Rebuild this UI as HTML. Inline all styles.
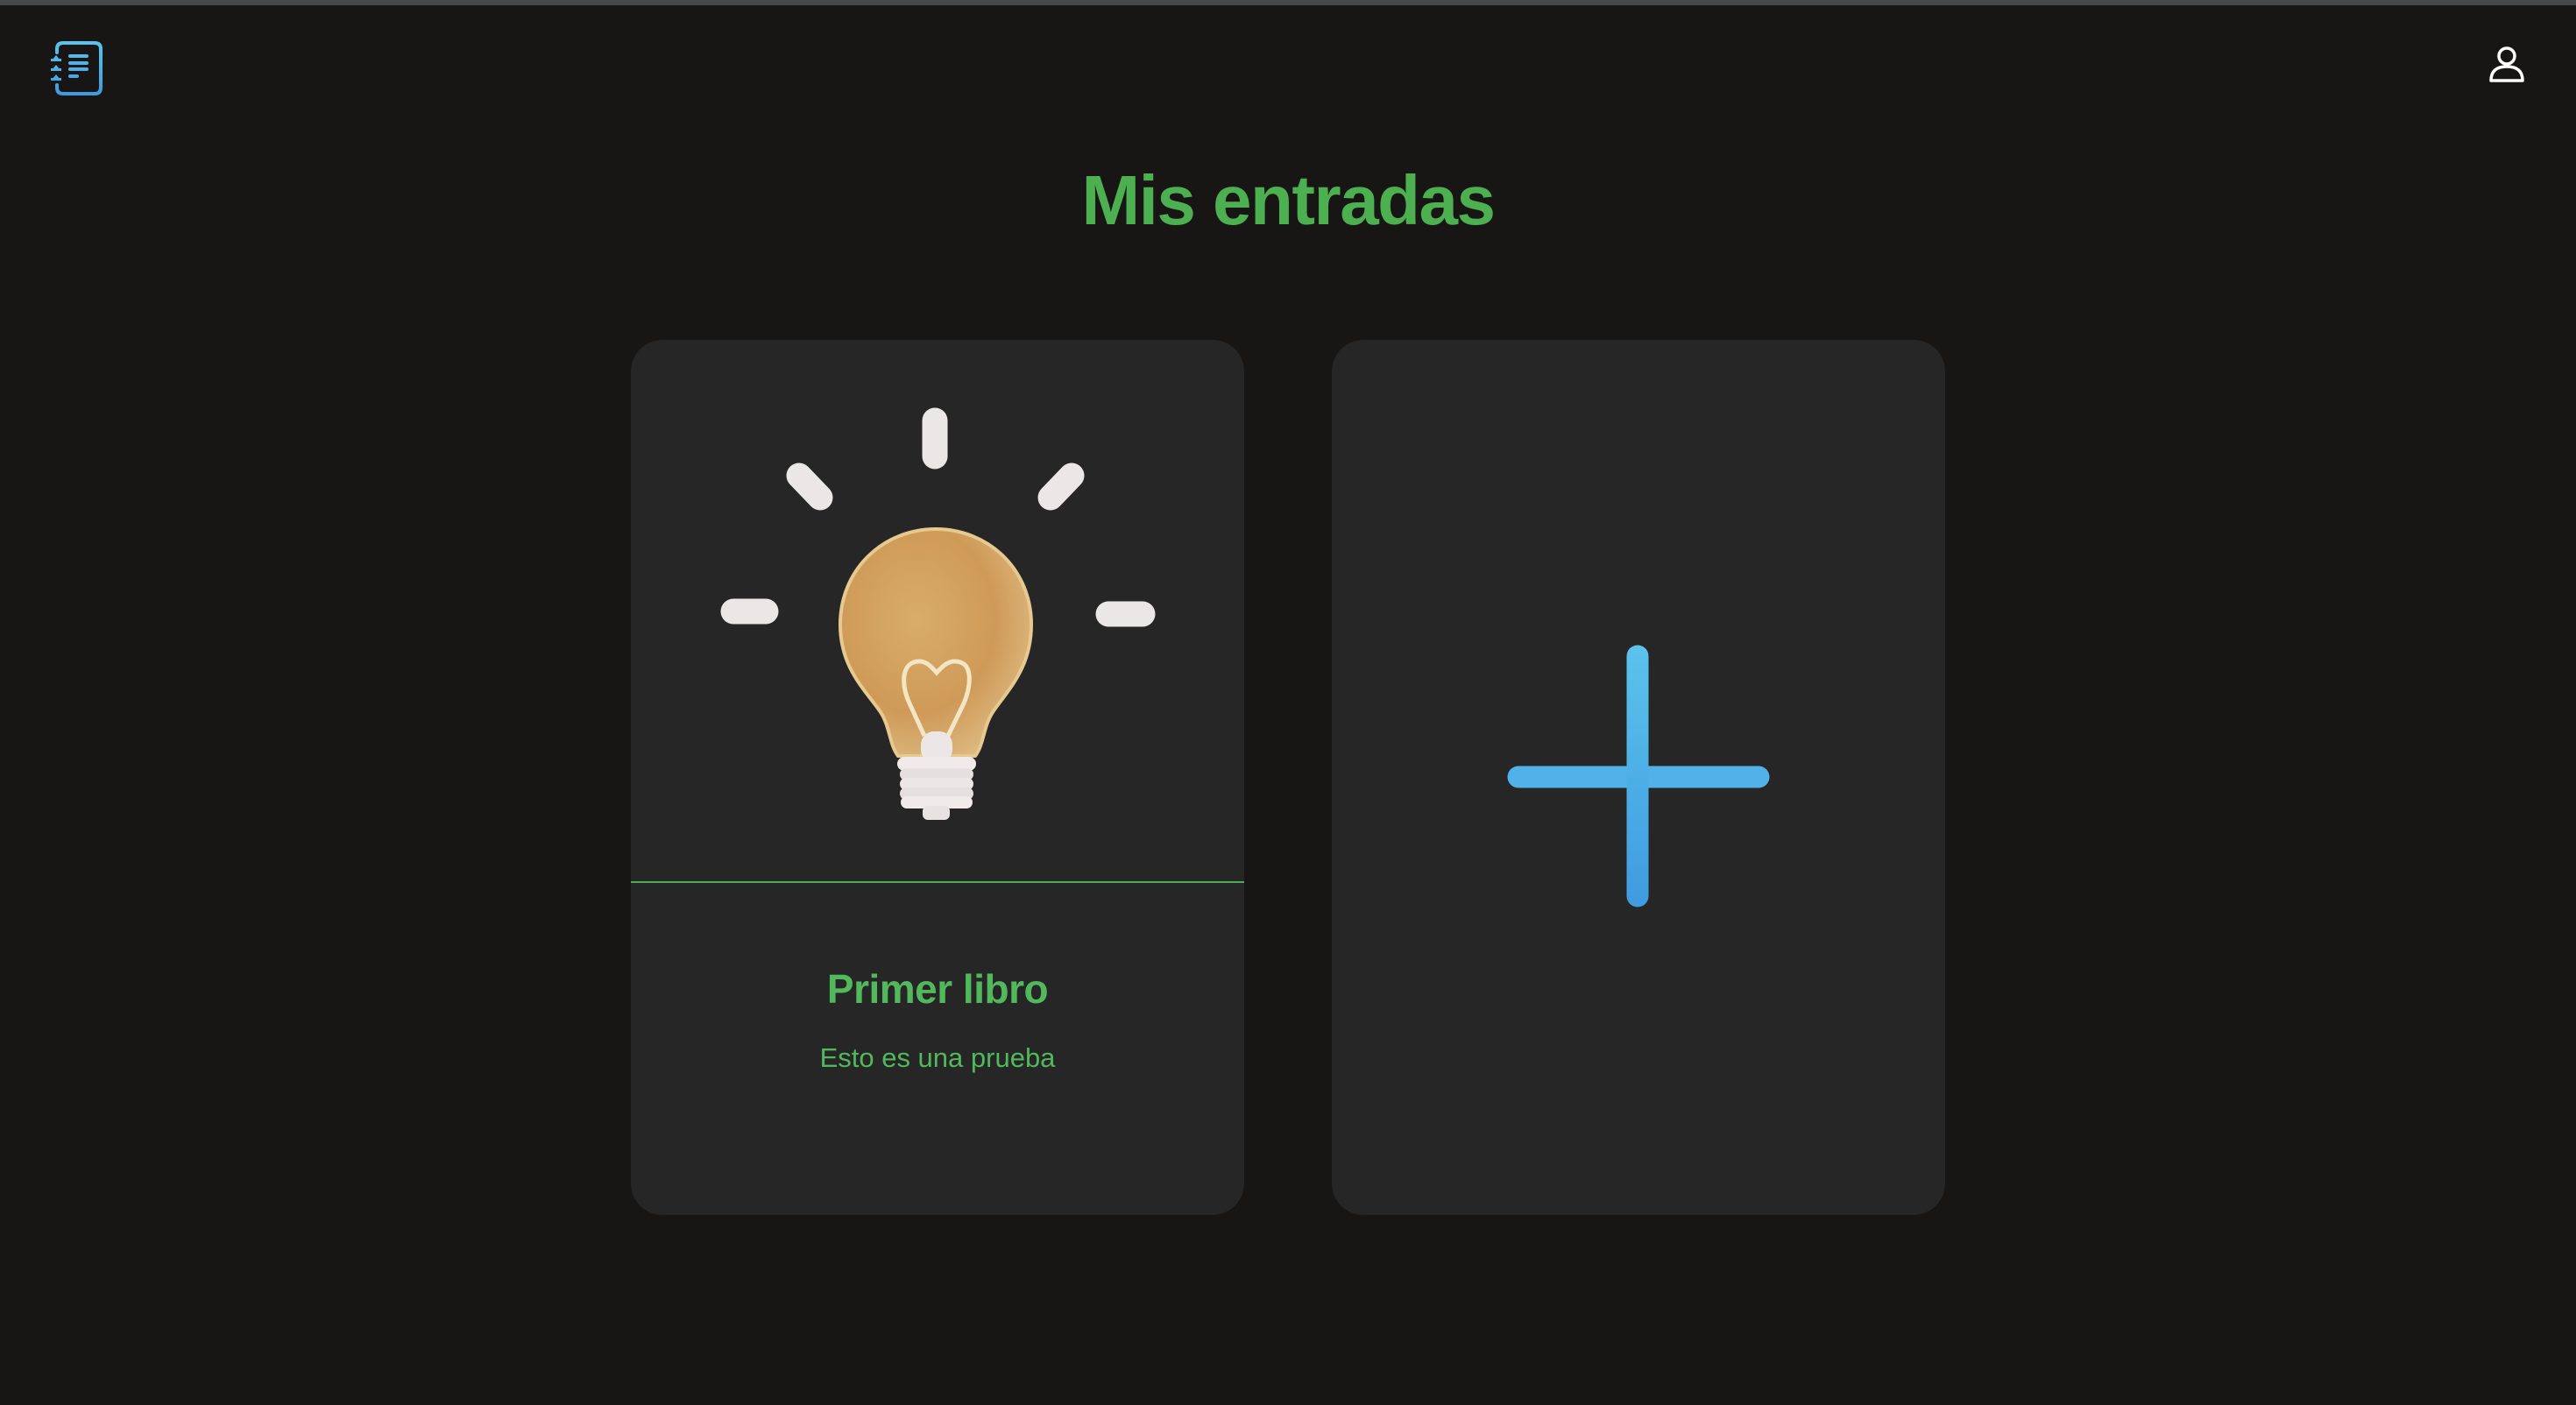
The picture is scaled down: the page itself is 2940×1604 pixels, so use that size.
<!DOCTYPE html>
<html><head><meta charset="utf-8"><style>
html,body{margin:0;padding:0;}
body{width:2940px;height:1604px;background:#181615;position:relative;overflow:hidden;font-family:"Liberation Sans",Roboto,sans-serif;}
.topbar{position:absolute;left:0;top:0;width:2940px;height:6px;background:#46484b;}
.card{position:absolute;top:388px;width:700px;height:999px;background:#262626;border-radius:36px;overflow:hidden;}
h1{position:absolute;left:0;width:2940px;top:179px;margin:0;text-align:center;color:#4caf50;font-size:80px;font-weight:bold;line-height:100px;letter-spacing:-1.5px;}
.t1{position:absolute;left:0;width:700px;top:713px;text-align:center;color:#52b85c;font-size:46px;font-weight:bold;line-height:56px;letter-spacing:-0.5px;}
.t2{position:absolute;left:0;width:700px;top:800px;text-align:center;color:#52b85c;font-size:31px;line-height:40px;}
</style></head><body>
<div class="topbar"></div>
<svg style="position:absolute;left:0;top:0" width="200" height="140">
<defs><linearGradient id="lg" gradientUnits="userSpaceOnUse" x1="0" y1="48" x2="0" y2="108"><stop offset="0" stop-color="#5bc3ec"/><stop offset="1" stop-color="#3f9be0"/></linearGradient></defs>
<g fill="none" stroke="url(#lg)" stroke-width="4" stroke-linecap="round">
<path d="M65 60 V56 Q65 49 72 49 H108 Q115 49 115 56 V100 Q115 107 108 107 H72 Q65 107 65 100 V97"/>
<path d="M80 64 H99 M80 72 H99 M80 79 H99 M80 87 H88"/>
</g>
<g fill="url(#lg)">
<path d="M59 69 l5 -6 l5 6 z"/><rect x="58" y="67" width="12" height="3"/>
<path d="M59 80 l5 -6 l5 6 z"/><rect x="58" y="78" width="12" height="3"/>
<path d="M59 91 l5 -6 l5 6 z"/><rect x="58" y="89" width="12" height="3"/>
</g>
</svg>
<svg style="position:absolute;left:2830px;top:40px" width="60" height="60" viewBox="2830 40 60 60">
<g fill="none" stroke="#fff" stroke-width="3.5">
<circle cx="2861" cy="64" r="9"/>
<path d="M2843 92 Q2843 76 2861 76 Q2879 76 2879 92 Z" stroke-linejoin="round"/>
</g></svg>
<h1>Mis entradas</h1>
<div class="card" style="left:720px">
<svg width="700" height="620" style="position:absolute;left:0;top:0">
<defs>
<radialGradient id="bg" cx="0.4" cy="0.4" r="0.75"><stop offset="0" stop-color="#d9ad6a"/><stop offset="0.55" stop-color="#cf9a58"/><stop offset="1" stop-color="#e2c48f"/></radialGradient>
</defs>
<g stroke="#ece7e7" stroke-linecap="round" stroke-width="29">
<path d="M347 92 V133"/>
<path d="M192 155 L216 180"/>
<path d="M503 155 L479 180"/>
<path d="M117 310 H154"/>
<path d="M545 313 H584"/>
</g>
<path d="M348 216 C288 216 239 262 239 325 C239 375 268 400 285 425 C296 442 295 462 305 475 L393 475 C403 462 402 442 413 425 C430 400 457 375 457 325 C457 262 408 216 348 216 Z" fill="url(#bg)" stroke="#e6c98f" stroke-width="4"/>
<path d="M335 452 L318 415 C308 393 310 372 323 368 C335 364 342 372 349 380 C356 372 364 364 376 368 C389 372 389 393 380 415 L362 452" fill="none" stroke="#f2e6c4" stroke-width="5"/>
<rect x="331" y="447" width="36" height="36" rx="15" fill="#ece6e6"/>
<rect x="304" y="476" width="90" height="16" rx="8" fill="#f0eaea"/>
<rect x="307" y="489" width="84" height="14" rx="7" fill="#e6dfe0"/>
<rect x="307" y="500" width="84" height="14" rx="7" fill="#ece6e6"/>
<rect x="307" y="511" width="84" height="14" rx="7" fill="#e6dfe0"/>
<rect x="308" y="521" width="82" height="14" rx="7" fill="#f0eaea"/>
<rect x="333" y="532" width="31" height="16" rx="6" fill="#e8e2e2"/>
</svg>
<div style="position:absolute;left:0;top:618px;width:700px;height:2px;background:#4caf50"></div>
<div class="t1">Primer libro</div>
<div class="t2">Esto es una prueba</div>
</div>
<div class="card" style="left:1520px">
<svg width="700" height="999" style="position:absolute;left:0;top:0">
<defs><linearGradient id="pg" gradientUnits="userSpaceOnUse" x1="0" y1="349" x2="0" y2="647"><stop offset="0" stop-color="#5bc3ec"/><stop offset="1" stop-color="#3f9be0"/></linearGradient></defs>
<g stroke-width="25" stroke-linecap="round">
<path d="M213 499 H487" stroke="#50b2e8"/>
<path d="M349 361 V635" stroke="url(#pg)"/>
</g>
</svg>
</div>
</body></html>
